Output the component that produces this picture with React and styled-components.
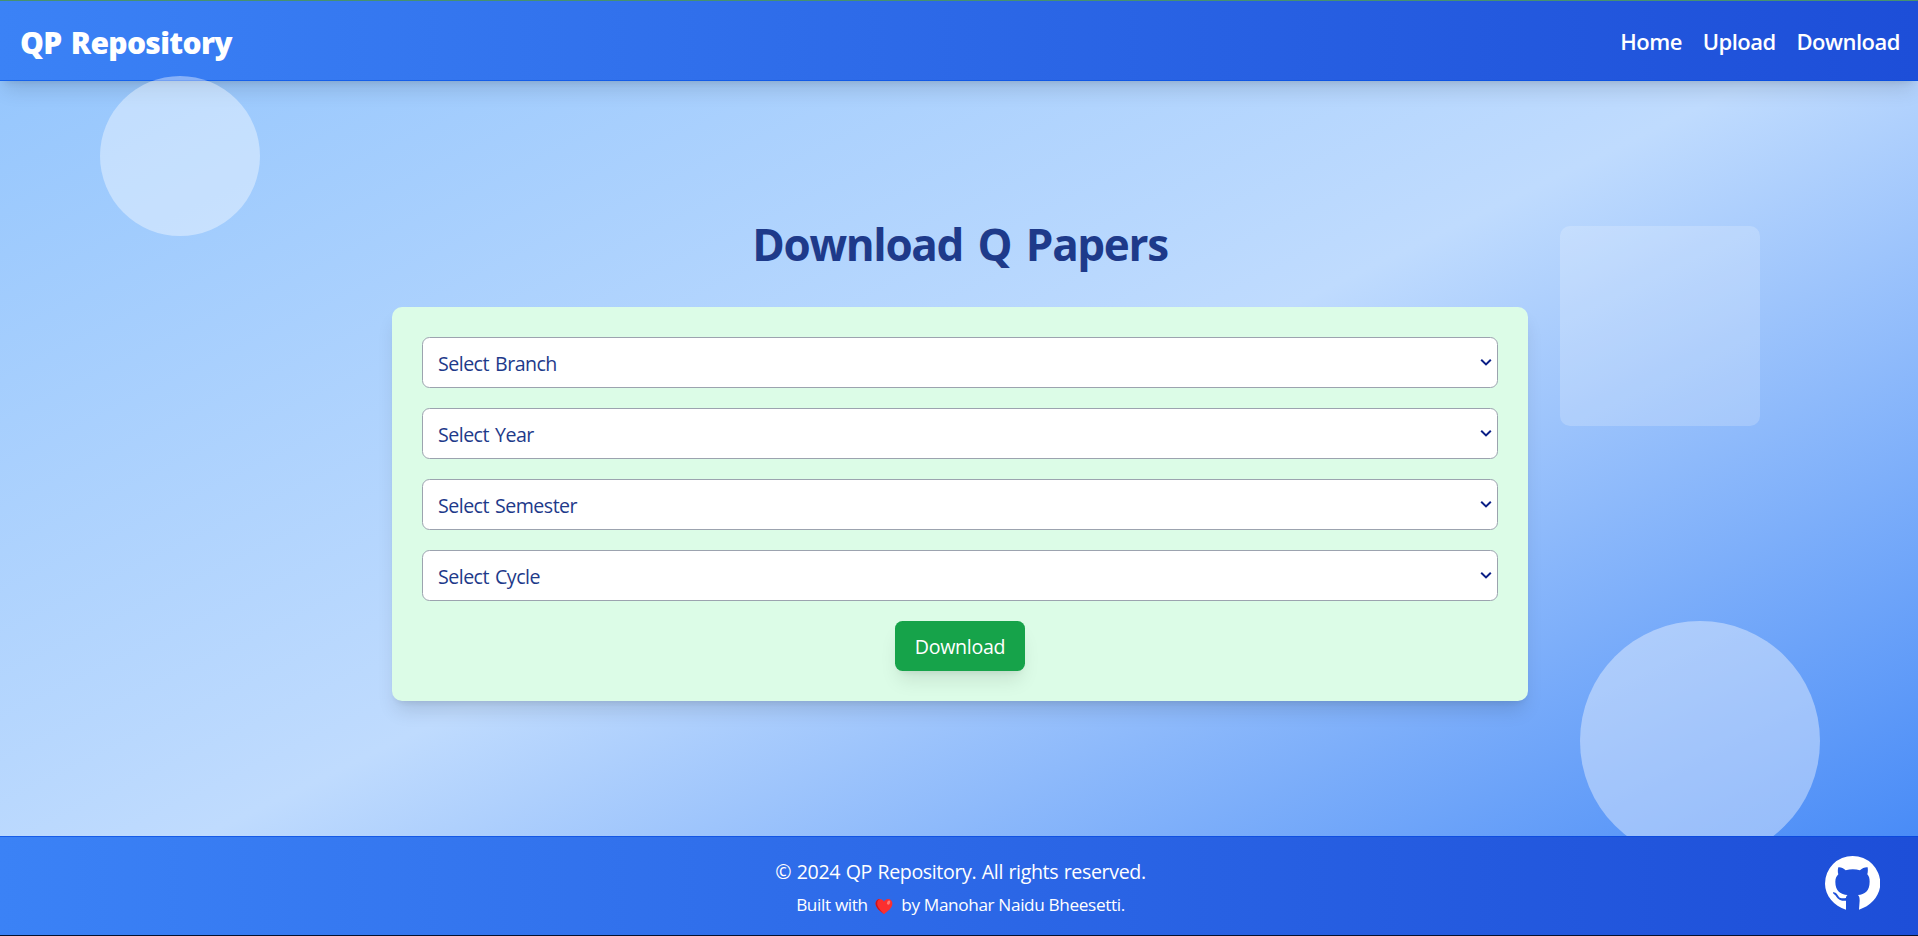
import React from "react";
import styled, { createGlobalStyle } from "styled-components";

const GlobalStyle = createGlobalStyle`
  *, *::before, *::after { box-sizing: border-box; }
  html { font-size: 20px; }
  body {
    margin: 0;
    overflow: hidden;
    font-family: "Open Sans", "Noto Sans", sans-serif;
  }
`;

const Page = styled.div`
  position: relative;
  display: flex;
  flex-direction: column;
  height: 936px;
  overflow: hidden;
  border-top: 1px solid #46916f;
  border-bottom: 1px solid #06122e;
  background: linear-gradient(to bottom right, #93c5fd, #bfdbfe, #3b82f6);
`;

const Navbar = styled.nav`
  display: flex;
  flex: none;
  align-items: center;
  justify-content: space-between;
  height: 80px;
  padding: 3px 18px 0 20px;
  color: #fff;
  background: linear-gradient(to right, #3b82f6, #1d4ed8);
  border-bottom: 1px solid rgba(0, 80, 230, 0.6);
  box-shadow: 0 12.5px 19px -4px rgba(0, 0, 0, 0.12), 0 5px 7.5px -5px rgba(0, 0, 0, 0.12);
`;

const Brand = styled.div`
  padding-top: 1px;
  font-family: "Noto Sans", "Open Sans", sans-serif;
  font-size: 30px;
  font-weight: 900;
  line-height: 40px;
  letter-spacing: -0.65px;
  word-spacing: 2px;
`;

const NavLinks = styled.div`
  display: flex;
  gap: 20.8px;
  padding-bottom: 2px;
`;

const NavLink = styled.a`
  color: #fff;
  font-size: 22px;
  font-weight: 600;
  line-height: 30px;
  letter-spacing: -0.5px;
  text-decoration: none;
`;

const Shape = styled.div`
  position: absolute;
  left: ${({ $left }) => $left}px;
  top: ${({ $top }) => $top}px;
  width: ${({ $size }) => $size}px;
  height: ${({ $size }) => $size}px;
  border-radius: ${({ $round }) => ($round ? "50%" : "10px")};
  background: #fff;
  opacity: ${({ $opacity }) => $opacity};
`;

const Main = styled.main`
  display: flex;
  flex: 1;
  flex-direction: column;
  align-items: center;
  padding-top: 138px;
`;

const Heading = styled.h1`
  margin: 0 0 38px 2px;
  color: #1e3a8a;
  font-size: 44px;
  font-weight: 700;
  line-height: 50px;
  letter-spacing: -1.35px;
  word-spacing: 4.5px;
`;

const Form = styled.form`
  position: relative;
  display: flex;
  flex-direction: column;
  align-items: center;
  gap: 20px;
  width: 1136px;
  padding: 30px;
  margin-left: 2px;
  border-radius: 10px;
  background: #dcfce7;
  box-shadow: 0 12.5px 19px -4px rgba(0, 0, 0, 0.12), 0 5px 7.5px -5px rgba(0, 0, 0, 0.12);
`;

const Field = styled.div`
  position: relative;
  width: 100%;
`;

const Select = styled.select`
  display: block;
  appearance: none;
  width: 100%;
  height: 51px;
  padding: 2px 15px 0;
  border: 1px solid #9ca3af;
  border-radius: 7.5px;
  color: #1e3a8a;
  background: #fff;
  font-family: inherit;
  font-size: 19.6px;
  letter-spacing: -0.52px;
  word-spacing: 1.5px;
`;

const Chevron = styled.svg`
  position: absolute;
  top: 20px;
  right: 6px;
  width: 12px;
  height: 10px;
  pointer-events: none;
`;

const DownloadButton = styled.button`
  width: 130px;
  height: 50px;
  padding: 0;
  border: 0;
  border-radius: 7.5px;
  color: #fff;
  background: #16a34a;
  font-family: inherit;
  font-size: 19.6px;
  letter-spacing: -0.3px;
  box-shadow: 0 12.5px 19px -4px rgba(0, 0, 0, 0.1), 0 5px 7.5px -5px rgba(0, 0, 0, 0.1);
`;

const Footer = styled.footer`
  position: relative;
  display: flex;
  flex: none;
  flex-direction: column;
  align-items: center;
  height: 99px;
  padding: 19px 0 0 3px;
  color: #fff;
  background: linear-gradient(to right, #3b82f6, #1d4ed8);
  border-top: 1px solid rgba(0, 70, 225, 0.6);
`;

const Copyright = styled.p`
  margin: 0;
  font-size: 19.6px;
  line-height: 32px;
  letter-spacing: -0.37px;
  word-spacing: 0.8px;
`;

const Credit = styled.p`
  display: flex;
  align-items: center;
  margin: 2px 0 0;
  font-size: 17.2px;
  line-height: 30px;
  letter-spacing: -0.36px;
`;

const Heart = styled.svg`
  width: 18px;
  height: 17px;
  margin: 2px 8px 0 7.5px;
`;

const GithubLink = styled.a`
  position: absolute;
  right: 38px;
  top: 18.5px;
  color: #fff;

  svg {
    display: block;
    width: 55.3px;
    height: 54px;
  }
`;

const links = ["Home", "Upload", "Download"];

const fields = ["Select Branch", "Select Year", "Select Semester", "Select Cycle"];

export default function App() {
  return (
    <Page>
      <GlobalStyle />
      <Navbar>
        <Brand>QP Repository</Brand>
        <NavLinks>
          {links.map((label) => (
            <NavLink key={label}>{label}</NavLink>
          ))}
        </NavLinks>
      </Navbar>
      <Shape $left={100} $top={75} $size={160} $round $opacity={0.4} />
      <Shape $left={1560} $top={225} $size={200} $opacity={0.2} />
      <Shape $left={1580} $top={620} $size={240} $round $opacity={0.4} />
      <Main>
        <Heading>Download Q Papers</Heading>
        <Form>
          {fields.map((label) => (
            <Field key={label}>
              <Select defaultValue="">
                <option value="">{label}</option>
              </Select>
              <Chevron viewBox="0 0 12 10">
                <path d="M1.200 2.700 6 7.400l4.800-4.700" fill="none" stroke="#0b1f86" strokeWidth="2" />
              </Chevron>
            </Field>
          ))}
          <DownloadButton type="button">Download</DownloadButton>
        </Form>
      </Main>
      <Footer>
        <Copyright>© 2024 QP Repository. All rights reserved.</Copyright>
        <Credit>
          Built with
          <Heart viewBox="0 0 18 17">
            <path
              d="M9 16.2C5.8 13.6.6 10.4.6 5.6.6 2.900 2.600 1 4.900 1 6.600 1 8.200 2 9 3.600 9.800 2 11.400 1 13.100 1c2.300 0 4.300 1.900 4.300 4.600 0 4.800-5.200 8-8.400 10.600z"
              fill="#fb2f2f"
            />
            <path
              d="M.6 5.600C.6 2.900 2.600 1 4.900 1 2.500 2.200 1.600 4.500 2.500 7.500c1 3.200 4.200 6.100 6.500 8.700C5.800 13.600.6 10.400.6 5.600z"
              fill="#c8141f"
            />
            <ellipse cx="13.600" cy="4.600" rx="1.500" ry="2.200" fill="#fd7a75" transform="rotate(25 13.600 4.600)" />
          </Heart>
          by Manohar Naidu Bheesetti.
        </Credit>
        <GithubLink aria-label="GitHub">
          <svg viewBox="29 32 166 162" fill="currentColor">
            <path d="M112 32A83 83 0 0 0 29 115C29 150 56 182 92 193L92 166C74 169 66 160 60 150C58 146 52 146 53 141C62 139 67 150 71 155C76 161 86 159 92 158C92 154 94 151 97 149C76 147 60 137 60 109C60 99 64 92 69 87C67 81 67 73 69 66C77 65 84 69 91 75C105 71 120 71 134 75C141 69 149 65 157 66C158 73 158 81 156 87C161 92 163 99 163 109C163 137 148 147 128 149C132 153 133 158 133 166L131 193C168 182 195 150 195 115A83 83 0 0 0 112 32Z" />
          </svg>
        </GithubLink>
      </Footer>
    </Page>
  );
}
